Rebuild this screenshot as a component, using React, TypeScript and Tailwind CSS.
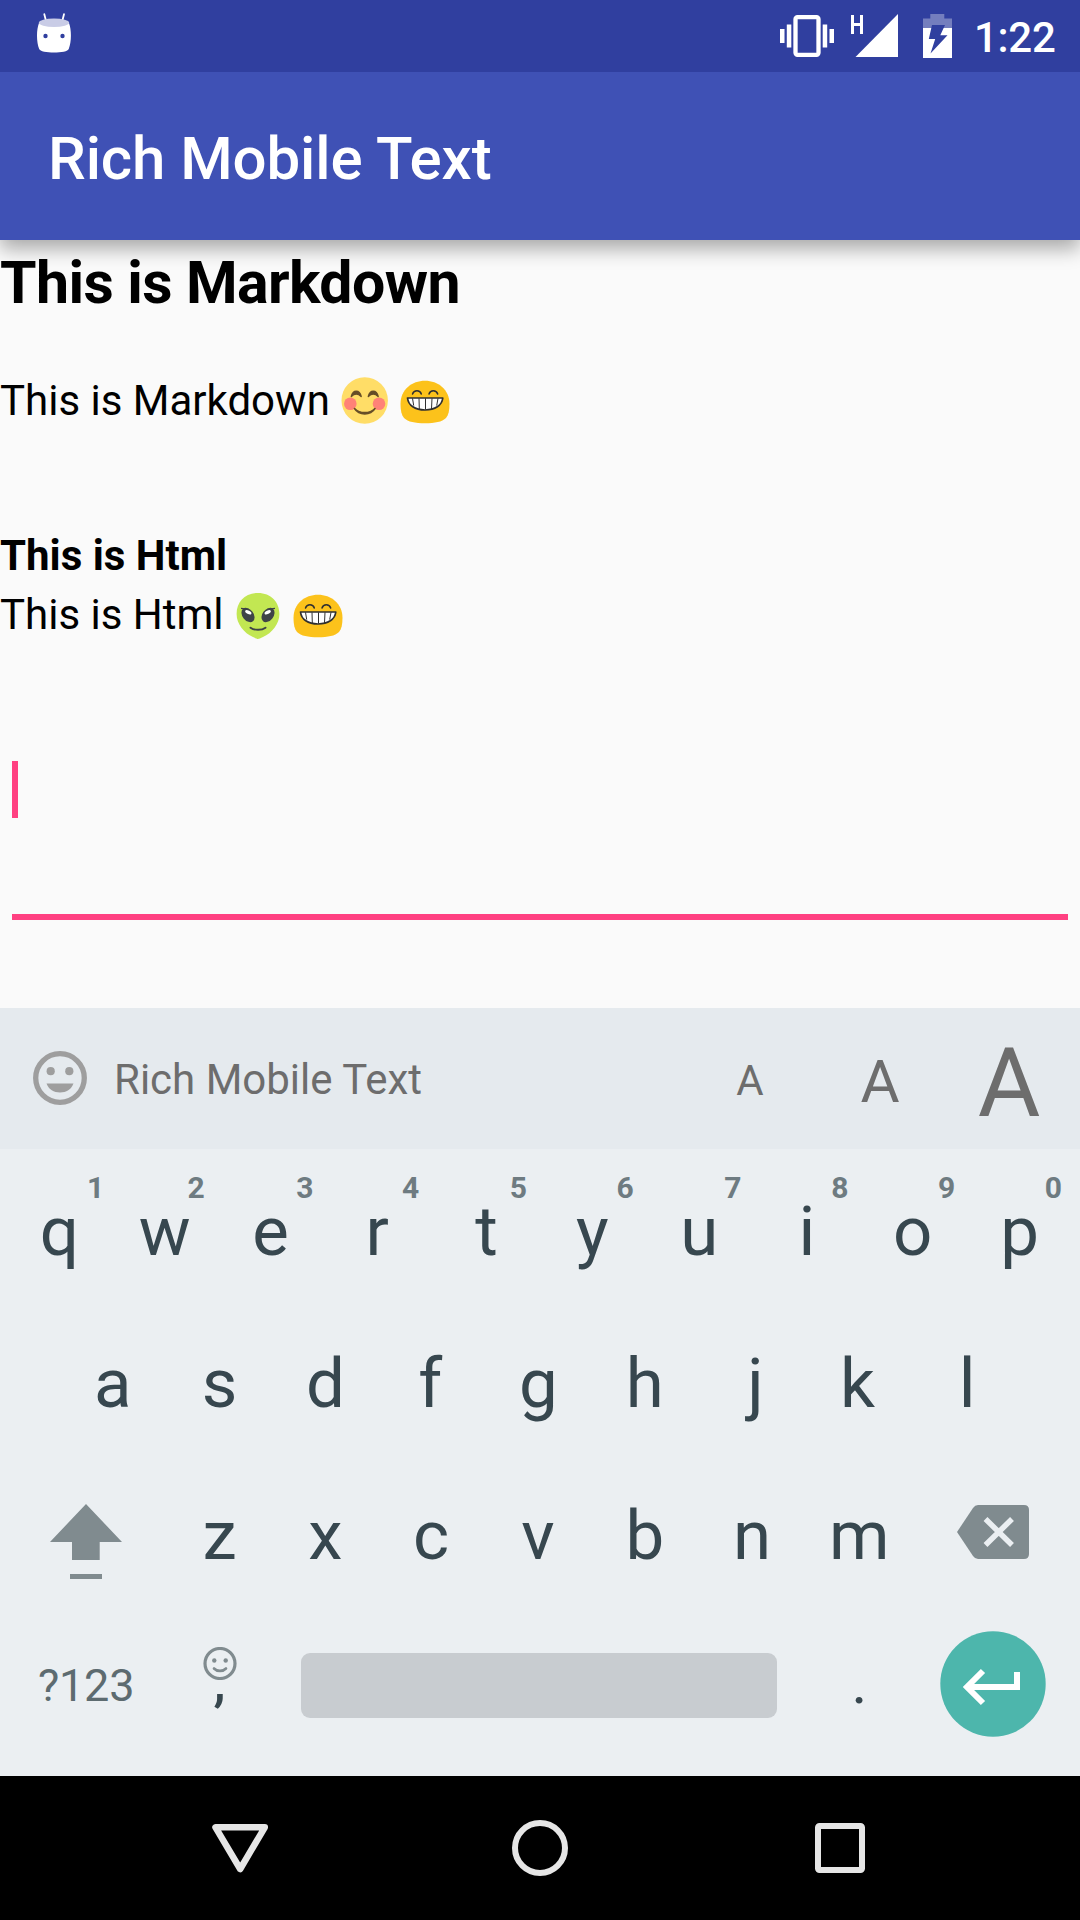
import React from "react";

function StatusBar() {
  return (
    <div className="relative z-10 flex h-[72px] items-center bg-[#303f9f] text-white">
      <svg className="ml-[37px] h-[42px] w-[34px] -mt-[4px]" viewBox="37 13 34 42" fill="none">
        <path d="M44.3 14.2 46.3 22M64 14.2 62 22" stroke="#fff" strokeWidth="1.8" strokeLinecap="round" />
        <path d="M39 23C36.3 30 36.3 42 39.2 49C40.5 53.8 67.5 53.8 68.7 49C71.6 42 71.6 30 69 23Z" fill="#fff" />
        <ellipse cx="54" cy="22.8" rx="15.2" ry="4.2" fill="#c9cce6" />
        <circle cx="45.5" cy="36" r="2.2" fill="#303f9f" />
        <circle cx="62.5" cy="36" r="2.2" fill="#303f9f" />
      </svg>
      <svg className="ml-[709px] h-[42px] w-[54px]" viewBox="0 0 54 42" fill="#fff">
        <rect x="15.5" y="2.2" width="23" height="37.6" rx="2" fill="none" stroke="#fff" strokeWidth="4.3" />
        <rect x="0" y="14" width="4.5" height="14" />
        <rect x="6.8" y="9.5" width="4.5" height="23" />
        <rect x="42.7" y="9.5" width="4.5" height="23" />
        <rect x="49.5" y="14" width="4.5" height="14" />
      </svg>
      <svg className="ml-[16px] h-[44px] w-[48px]" viewBox="850 14 48 44" fill="#fff">
        <path d="M855.5 57 898 14V57Z" />
        <path d="M851 15h3v8h6v-8h3v19h-3v-8h-6v8h-3Z" />
      </svg>
      <svg className="ml-[25px] h-[44px] w-[29px]" viewBox="0 0 29 44">
        <path d="M0 14V4.5h7.3V0h14v4.5H29V14Z" fill="#fff" fillOpacity=".33" />
        <path d="M0 14H29V44H0Z" fill="#fff" />
        <path d="M9 11H22L17.3 21.2H24.5L7.5 39.5 12.2 25H5.8Z" fill="#303f9f" />
      </svg>
      <span className="ml-[22px] mt-[3px] text-[42px] leading-none font-medium tracking-[-0.3px]">1:22</span>
    </div>
  );
}

function BlushEmoji() {
  return (
    <svg className="h-[48px] w-[48px] shrink-0" viewBox="0 0 48 48" fill="none">
      <circle cx="23.7" cy="23.5" r="23.2" fill="#ffdd67" />
      <circle cx="9.3" cy="26.7" r="6.3" fill="#ff8277" />
      <circle cx="38" cy="26.7" r="6.3" fill="#ff8277" />
      <path d="M10.3 19.5C12 12.5 18.5 12.5 20.2 19.5C17 16.2 13.5 16.2 10.3 19.5ZM27.3 19.5C29 12.5 35.5 12.5 37.2 19.5C34 16.2 30.5 16.2 27.3 19.5Z" fill="#664e27" stroke="#664e27" strokeWidth="1.4" strokeLinejoin="round" />
      <path d="M13.5 31.5C19 37 28.5 37 34 31.5C29.5 38.6 18 38.6 13.5 31.5Z" fill="#664e27" stroke="#664e27" strokeWidth="1.6" strokeLinejoin="round" />
    </svg>
  );
}

function GrinEmoji() {
  return (
    <svg className="mt-[1px] h-[44px] w-[50px] shrink-0" viewBox="0 0 50 44" fill="none">
      <path d="M25 .8C12 .8.5 9.5.5 24C.5 30 1.5 35 4 38C8 42 15 43.200 25 43.200S42 42 46 38C48.500 35 49.500 30 49.500 24C49.500 9.500 38 .8 25 .8Z" fill="#fcc21b" />
      <path d="M12.500 14C14 9.800 20 9.800 21.300 14M29 14C30.400 9.800 36.200 9.800 37.700 14" stroke="#303030" strokeWidth="1.5" strokeLinecap="round" />
      <path d="M7.5 18H42.8C42 25.5 35 30 25 30S8.3 25.5 7.5 18Z" fill="#fff" stroke="#303030" strokeWidth="1.7" strokeLinejoin="round" />
      <path d="M12.500 18.300 13.700 25.600M19 18.300 19.300 29M25.500 18.300V29.500M32 18.300 31.500 29M38 18.300 36.700 25.600" stroke="#303030" strokeWidth="1" />
    </svg>
  );
}

function AlienEmoji() {
  return (
    <svg className="mt-[2px] h-[46px] w-[44px] shrink-0" viewBox="0 0 44 46" fill="none">
      <path d="M22 0C9 0 .6 9 .6 21C.6 31 8 40 17 44C19.5 45.3 21 46 22 46S24.5 45.3 27 44C36 40 43.4 31 43.4 21C43.4 9 35 0 22 0Z" fill="#c2e752" />
      <ellipse cx="12" cy="22" rx="5.5" ry="8" transform="rotate(-38 12 22)" fill="#3e4347" />
      <ellipse cx="32" cy="22" rx="5.5" ry="8" transform="rotate(38 32 22)" fill="#3e4347" />
      <path d="M5 15.3 13 16.3M39 15.3 31 16.3" stroke="#3e4347" strokeWidth="1.2" />
      <ellipse cx="12.3" cy="19.300" rx="3.400" ry="1.700" transform="rotate(28 12.3 19.300)" fill="#fff" />
      <ellipse cx="31.7" cy="19.300" rx="3.400" ry="1.700" transform="rotate(-28 31.7 19.300)" fill="#fff" />
      <path d="M14.500 34.700C18 37.500 26 37.500 29.500 34.700" stroke="#3e4347" strokeWidth="1.9" strokeLinecap="round" />
    </svg>
  );
}

function Content() {
  return (
    <main className="flex h-[768px] flex-col text-[42px] text-black">
      <h1 className="text-[59px] leading-[86px] font-bold tracking-[-0.6px]">This is Markdown</h1>
      <p className="mt-[45px] flex h-[60px] items-center whitespace-nowrap">
        <span className="w-[341px] pb-[2px]">This is Markdown</span>
        <BlushEmoji />
        <span className="w-[11px]" />
        <GrinEmoji />
      </p>
      <p className="mt-[95px] leading-[59px] font-bold">This is Html</p>
      <p className="flex h-[60px] items-center whitespace-nowrap">
        <span className="w-[236px] pb-[2px]">This is Html</span>
        <AlienEmoji />
        <span className="w-[13px]" />
        <GrinEmoji />
      </p>
      <div className="mx-[12px] mt-[116px] flex h-[159px] flex-col border-b-[6px] border-[#ff4081]">
        <span className="h-[57px] w-[6px] bg-[#ff4081]" />
      </div>
    </main>
  );
}

function SuggestionBar() {
  return (
    <div className="flex h-[141px] items-center bg-[#e5eaee] pl-[33px] text-[#6d6d6d]">
      <svg className="h-[55px] w-[54px]" viewBox="0 0 54 55" fill="#9e9e9e">
        <circle cx="27" cy="27" r="24.3" fill="none" stroke="#9e9e9e" strokeWidth="5.3" />
        <circle cx="17.7" cy="20.2" r="4.1" />
        <circle cx="36.3" cy="20.2" r="4.1" />
        <path d="M13.5 32.5H40.5C38.3 38.5 33.2 41.5 27 41.5S15.7 38.5 13.5 32.5Z" />
      </svg>
      <span className="mt-[2px] ml-[27px] w-[571px] text-[42px]">Rich Mobile Text</span>
      <span className="mt-[4px] w-[130px] text-center text-[42px]">A</span>
      <span className="mt-[6px] w-[130px] text-center text-[60px]">A</span>
      <span className="mt-[9px] w-[130px] pr-[2px] text-center text-[96px]">A</span>
    </div>
  );
}

const LETTER_SHIFT: Record<string, number> = {
  w: -1.5, e: -2.5, r: -2.5, y: -1, u: -1, o: -1, p: -1,
  d: -1, f: -3, g: -1.5, h: -2, j: 2, k: -3,
  x: -1, c: -2, v: -2, b: -2, n: -1.5, m: -1,
};
const HINT_SHIFT: Record<string, number> = { "1": 3.5, "2": -3, "3": -1, "4": -2, "5": -1, "6": -1 };

function Key({ label, hint }: { label: string; hint?: string }) {
  return (
    <div className="relative flex w-[106.8px] items-center justify-center text-[69px] leading-none">
      <span style={{ marginLeft: 2 * (LETTER_SHIFT[label] ?? 0) }}>{label}</span>
      {hint && (
        <span
          className="absolute top-[18px] right-[12px] text-[30px] leading-[30px] font-bold text-[#6e7b81]"
          style={{ marginRight: -(HINT_SHIFT[hint] ?? 0) }}
        >
          {hint}
        </span>
      )}
    </div>
  );
}

function Keyboard() {
  return (
    <div className="flex h-[627px] flex-col bg-[#ebeff2] px-[6px] pt-[6px] text-[#37474f]">
      <div className="flex h-[152px]">
        {"qwertyuiop".split("").map((c, i) => (
          <Key key={c} label={c} hint={String((i + 1) % 10)} />
        ))}
      </div>
      <div className="flex h-[152px] justify-center">
        {"asdfghjkl".split("").map((c) => (
          <Key key={c} label={c} />
        ))}
      </div>
      <div className="flex h-[152px]">
        <div className="flex w-[160.2px] items-center justify-center pt-[13px]">
          <svg className="h-[76px] w-[72px]" viewBox="0 0 72 76" fill="#808b8f">
            <path d="M36 0 72 38H49.7V56H22V38H0Z" />
            <rect x="20" y="70" width="32" height="5" />
          </svg>
        </div>
        {"zxcvbnm".split("").map((c) => (
          <Key key={c} label={c} />
        ))}
        <div className="flex w-[160.2px] items-center justify-center pr-[2px] pb-[6px]">
          <svg className="h-[54px] w-[72px]" viewBox="0 0 72 54">
            <path d="M21 0H67Q72 0 72 5V49Q72 54 67 54H21Q18 54 16 51L0 27 16 3Q18 0 21 0Z" fill="#808b8f" />
            <path d="M28.5 14 55 40M55 14 28.5 40" stroke="#ebeff2" strokeWidth="5.5" />
          </svg>
        </div>
      </div>
      <div className="flex h-[152px]">
        <div className="flex w-[160.2px] items-center justify-center pb-[2px] text-[45px] tracking-[-0.2px] text-[#5d6b70]">?123</div>
        <div className="relative flex w-[106.8px] items-center justify-center pb-[11px] text-[54px] leading-none font-medium">
          ,
          <svg className="absolute top-[36px] left-[36.5px] h-[33px] w-[34px]" viewBox="0 0 34 33" fill="none">
            <circle cx="17" cy="16.5" r="15" stroke="#808b8f" strokeWidth="3.2" />
            <circle cx="11.3" cy="13.5" r="2.2" fill="#808b8f" />
            <circle cx="22.7" cy="13.5" r="2.2" fill="#808b8f" />
            <path d="M11 21.5C14 24.7 20 24.7 23 21.5" stroke="#808b8f" strokeWidth="2.6" strokeLinecap="round" />
          </svg>
        </div>
        <div className="flex w-[534px] items-center justify-center pr-[2px] pb-[3px]">
          <div className="h-[65px] w-[476px] rounded-[9px] bg-[#c8ccd0]" />
        </div>
        <div className="flex w-[106.8px] items-center justify-center pr-[2px] pb-[8px] text-[60px] leading-none">.</div>
        <div className="flex w-[160.2px] items-center justify-center pr-[2px] pb-[6px]">
          <svg className="h-[106px] w-[106px]" viewBox="940 1631 106 106" fill="none">
            <circle cx="993" cy="1684" r="52.7" fill="#4db6ac" />
            <path d="M983 1671 967 1687 983 1703M967 1687H1017V1672" stroke="#fff" strokeWidth="6" />
          </svg>
        </div>
      </div>
    </div>
  );
}

function NavBar() {
  return (
    <div className="flex h-[144px] items-center justify-between bg-black px-[210px]">
      <svg className="h-[60px] w-[60px]" viewBox="0 0 60 60" fill="none">
        <path d="M5.5 9.3H54.8L30.2 51Z" stroke="#e6e6e6" strokeWidth="6.5" strokeLinejoin="round" />
      </svg>
      <svg className="h-[60px] w-[60px]" viewBox="0 0 60 60" fill="none">
        <circle cx="30" cy="30" r="25" stroke="#e6e6e6" strokeWidth="6" />
      </svg>
      <svg className="h-[60px] w-[60px]" viewBox="0 0 60 60" fill="none">
        <rect x="8" y="8" width="44" height="44" rx="1.5" stroke="#e6e6e6" strokeWidth="6" />
      </svg>
    </div>
  );
}

export default function App() {
  return (
    <div className="flex h-[1920px] w-[1080px] flex-col overflow-hidden bg-[#fafafa] font-['Roboto',sans-serif]">
      <StatusBar />
      <header className="flex h-[168px] shrink-0 items-center bg-[#3f51b5] pt-[5px] pl-[48px] text-[60px] font-medium tracking-[-0.1px] text-white shadow-[0_9px_18px_rgba(0,0,0,0.32)]">
        Rich Mobile Text
      </header>
      <Content />
      <SuggestionBar />
      <Keyboard />
      <NavBar />
    </div>
  );
}
